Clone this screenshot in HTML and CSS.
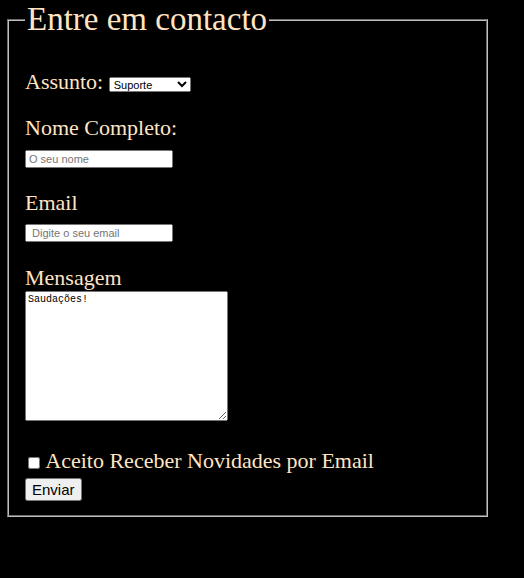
FILE: index.html
```html
<!DOCTYPE html>
<html lang="pt">
<head>
<meta charset="utf-8">
<title>Entre em contacto</title>
<link rel="stylesheet" href="styles.css">
</head>
<body>
<form class="page">
  <fieldset class="contact">
    <legend class="title">Entre em contacto</legend>
    <div class="row row-subject">
      <label class="lbl-inline" for="assunto">Assunto:</label>
      <select id="assunto" class="select">
        <option>Suporte</option>
        <option>Vendas</option>
        <option>Outro</option>
      </select>
    </div>
    <div class="field field-name">
      <label class="lbl" for="nome">Nome Completo:</label>
      <input id="nome" class="text-input" type="text" placeholder="O seu nome">
    </div>
    <div class="field field-email">
      <label class="lbl" for="email">Email</label>
      <input id="email" class="text-input" type="email" placeholder=" Digite o seu email">
    </div>
    <div class="field field-msg">
      <label class="lbl" for="msg">Mensagem</label>
      <textarea id="msg" class="textarea">Saudações!</textarea>
    </div>
    <div class="row row-check">
      <input id="news" class="check" type="checkbox"> <label for="news">Aceito Receber Novidades por Email</label>
    </div>
    <button class="btn" type="button">Enviar</button>
  </fieldset>
</form>
</body>
</html>
```
FILE: styles.css
```css
html, body {
  background: #000;
}
body {
  margin: 0;
  padding: 1px 0 0 7px;
  font-family: "Liberation Serif", "Times New Roman", serif;
  color: #ffe4c4;
}
.page {
  margin: 0;
}
.contact {
  box-sizing: border-box;
  width: 481px;
  margin: 0;
  padding: 0 16px 14px 16px;
  border: 2px groove #c0c0c0;
  font-size: 22px;
  line-height: 25px;
}
.title {
  font-size: 33px;
  line-height: normal;
  padding: 0 2px;
}
.row-subject {
  margin-top: 31px;
  height: 25px;
}
.select {
  font-family: "Liberation Sans", Arial, sans-serif;
  font-size: 11px;
  width: 82px;
  height: 15px;
  padding: 0;
  box-sizing: border-box;
  vertical-align: 0;
}
.lbl {
  display: block;
  height: 25px;
}
.field-name { margin-top: 21px; }
.field-email { margin-top: 22px; }
.field-msg { margin-top: 23px; }
.text-input {
  display: block;
  box-sizing: border-box;
  width: 148px;
  height: 18px;
  margin: 10px 0 0 0;
  padding: 0 2px;
  font-family: "Liberation Sans", Arial, sans-serif;
  font-size: 11px;
}
.field-email .text-input { margin-top: 9px; }
.textarea {
  display: block;
  box-sizing: border-box;
  width: 203px;
  height: 130px;
  margin: 1px 0 0 0;
  padding: 2px;
  font-family: "Liberation Mono", "Courier New", monospace;
  font-size: 10px;
}
.row-check {
  margin-top: 27px;
  height: 25px;
}
.check {
  width: 12px;
  height: 12px;
  margin: 0 1px 0 3px;
  vertical-align: -1px;
}
.btn {
  display: block;
  margin-top: 5px;
  padding: 1px 5px;
  height: 23px;
  font-family: "Liberation Sans", Arial, sans-serif;
  font-size: 15px;
}
```
